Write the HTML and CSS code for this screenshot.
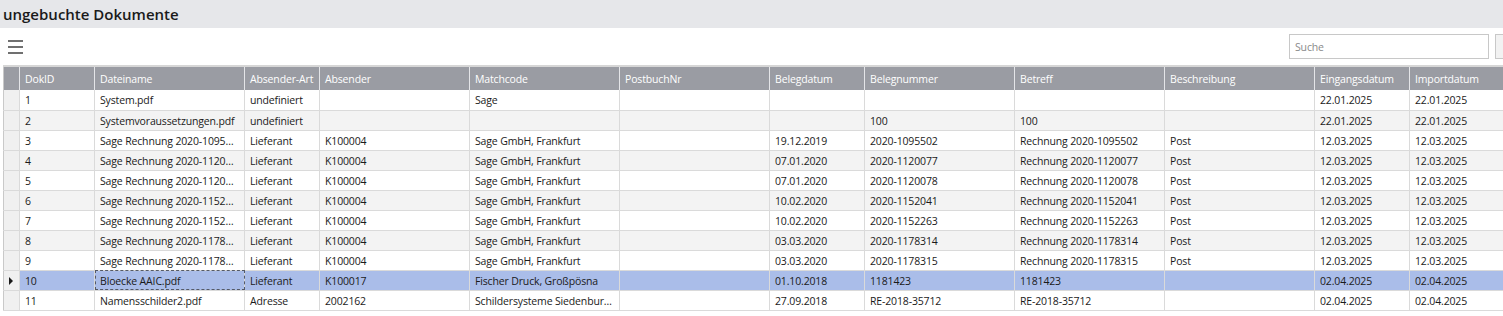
FILE: index.html
```html
<!DOCTYPE html>
<html lang="de">
<head>
  <meta charset="UTF-8">
  <link rel="stylesheet" href="styles.css">
  <title>ungebuchte Dokumente</title>
</head>
<body class="page">
  <header class="titlebar">
    <h1 class="titlebar__title">ungebuchte Dokumente</h1>
  </header>

  <div class="toolbar">
    <button class="menu-button" aria-label="Menü">
      <svg width="16" height="16" viewBox="0 0 16 16">
        <rect x="0" y="1" width="15" height="2" fill="#707070"/>
        <rect x="0" y="7" width="15" height="2" fill="#707070"/>
        <rect x="0" y="13" width="15" height="2" fill="#707070"/>
      </svg>
    </button>
    <div class="search">
      <input class="search__input" type="text" placeholder="Suche">
      <button class="search__button">▾</button>
    </div>
  </div>

  <table class="grid">
    <colgroup>
      <col style="width:16px">
      <col style="width:75px">
      <col style="width:150px">
      <col style="width:75px">
      <col style="width:150px">
      <col style="width:150px">
      <col style="width:150px">
      <col style="width:95px">
      <col style="width:150px">
      <col style="width:150px">
      <col style="width:150px">
      <col style="width:95px">
      <col style="width:95px">
    </colgroup>
    <thead>
      <tr class="grid__head">
        <th class="grid__rowhead"></th>
        <th>DokID</th>
        <th>Dateiname</th>
        <th>Absender-Art</th>
        <th>Absender</th>
        <th>Matchcode</th>
        <th>PostbuchNr</th>
        <th>Belegdatum</th>
        <th>Belegnummer</th>
        <th>Betreff</th>
        <th>Beschreibung</th>
        <th>Eingangsdatum</th>
        <th>Importdatum</th>
      </tr>
    </thead>
    <tbody>
      <tr>
        <td class="grid__rowhead"></td>
        <td>1</td><td>System.pdf</td><td>undefiniert</td><td></td><td>Sage</td><td></td>
        <td></td><td></td><td></td><td></td><td>22.01.2025</td><td>22.01.2025</td>
      </tr>
      <tr class="grid__row_alt">
        <td class="grid__rowhead"></td>
        <td>2</td><td>Systemvoraussetzungen.pdf</td><td>undefiniert</td><td></td><td></td><td></td>
        <td></td><td>100</td><td>100</td><td></td><td>22.01.2025</td><td>22.01.2025</td>
      </tr>
      <tr>
        <td class="grid__rowhead"></td>
        <td>3</td><td>Sage Rechnung 2020-1095502.pdf</td><td>Lieferant</td><td>K100004</td><td>Sage GmbH, Frankfurt</td><td></td>
        <td>19.12.2019</td><td>2020-1095502</td><td>Rechnung 2020-1095502</td><td>Post</td><td>12.03.2025</td><td>12.03.2025</td>
      </tr>
      <tr class="grid__row_alt">
        <td class="grid__rowhead"></td>
        <td>4</td><td>Sage Rechnung 2020-1120077.pdf</td><td>Lieferant</td><td>K100004</td><td>Sage GmbH, Frankfurt</td><td></td>
        <td>07.01.2020</td><td>2020-1120077</td><td>Rechnung 2020-1120077</td><td>Post</td><td>12.03.2025</td><td>12.03.2025</td>
      </tr>
      <tr>
        <td class="grid__rowhead"></td>
        <td>5</td><td>Sage Rechnung 2020-1120078.pdf</td><td>Lieferant</td><td>K100004</td><td>Sage GmbH, Frankfurt</td><td></td>
        <td>07.01.2020</td><td>2020-1120078</td><td>Rechnung 2020-1120078</td><td>Post</td><td>12.03.2025</td><td>12.03.2025</td>
      </tr>
      <tr class="grid__row_alt">
        <td class="grid__rowhead"></td>
        <td>6</td><td>Sage Rechnung 2020-1152041.pdf</td><td>Lieferant</td><td>K100004</td><td>Sage GmbH, Frankfurt</td><td></td>
        <td>10.02.2020</td><td>2020-1152041</td><td>Rechnung 2020-1152041</td><td>Post</td><td>12.03.2025</td><td>12.03.2025</td>
      </tr>
      <tr>
        <td class="grid__rowhead"></td>
        <td>7</td><td>Sage Rechnung 2020-1152263.pdf</td><td>Lieferant</td><td>K100004</td><td>Sage GmbH, Frankfurt</td><td></td>
        <td>10.02.2020</td><td>2020-1152263</td><td>Rechnung 2020-1152263</td><td>Post</td><td>12.03.2025</td><td>12.03.2025</td>
      </tr>
      <tr class="grid__row_alt">
        <td class="grid__rowhead"></td>
        <td>8</td><td>Sage Rechnung 2020-1178314.pdf</td><td>Lieferant</td><td>K100004</td><td>Sage GmbH, Frankfurt</td><td></td>
        <td>03.03.2020</td><td>2020-1178314</td><td>Rechnung 2020-1178314</td><td>Post</td><td>12.03.2025</td><td>12.03.2025</td>
      </tr>
      <tr>
        <td class="grid__rowhead"></td>
        <td>9</td><td>Sage Rechnung 2020-1178315.pdf</td><td>Lieferant</td><td>K100004</td><td>Sage GmbH, Frankfurt</td><td></td>
        <td>03.03.2020</td><td>2020-1178315</td><td>Rechnung 2020-1178315</td><td>Post</td><td>12.03.2025</td><td>12.03.2025</td>
      </tr>
      <tr class="grid__row_selected">
        <td class="grid__rowhead grid__rowhead_current"></td>
        <td>10</td><td class="grid__cell_focus">Bloecke AAIC.pdf</td><td>Lieferant</td><td>K100017</td><td>Fischer Druck, Großpösna</td><td></td>
        <td>01.10.2018</td><td>1181423</td><td>1181423</td><td></td><td>02.04.2025</td><td>02.04.2025</td>
      </tr>
      <tr>
        <td class="grid__rowhead"></td>
        <td>11</td><td>Namensschilder2.pdf</td><td>Adresse</td><td>2002162</td><td>Schildersysteme Siedenburg GmbH</td><td></td>
        <td>27.09.2018</td><td>RE-2018-35712</td><td>RE-2018-35712</td><td></td><td>02.04.2025</td><td>02.04.2025</td>
      </tr>
    </tbody>
  </table>
</body>
</html>
```

FILE: styles.css
```css
html, .page {
  margin: 0;
  overflow: hidden;
  background: #FFFFFF;
  font-family: 'Open Sans', 'Noto Sans', sans-serif;
  color: #1A1A1A;
}

* {
  box-sizing: border-box;
}

.page {
  width: 1530px;
}

.titlebar {
  height: 28px;
  width: 1503px;
  background: #E6E7EA;
  padding: 0 3px;
  display: flex;
  align-items: center;
}

.titlebar__title {
  margin: 0;
  font-size: 15px;
  font-weight: 600;
  color: #1A1A1A;
}

.toolbar {
  height: 37px;
  display: flex;
  align-items: center;
  justify-content: space-between;
  padding: 0 0 0 8px;
}

.menu-button {
  border: 0;
  padding: 0;
  background: none;
  width: 16px;
  height: 16px;
  display: flex;
}

.search {
  display: flex;
  gap: 6px;
  margin-right: 11px;
}

.search__input {
  width: 200px;
  height: 25px;
  border: 1px solid #C8C8C8;
  padding: 0 5px;
  font-family: inherit;
  font-size: 10.5px;
  letter-spacing: -0.15px;
  color: #333333;
}

.search__input::placeholder {
  color: #8A8A8A;
}

.search__button {
  width: 24px;
  height: 25px;
  border: 1px solid #C8C8C8;
  background: #F2F2F2;
  font-size: 9px;
  color: #555555;
  padding: 0;
}

.grid {
  margin-left: 3px;
  border-collapse: collapse;
  table-layout: fixed;
  width: 1501px;
  font-size: 10.5px;
  letter-spacing: -0.15px;
  border-top: 2px solid #D6D6D6;
}

.grid th,
.grid td {
  padding: 0 5px;
  text-align: left;
  white-space: nowrap;
  overflow: hidden;
  text-overflow: ellipsis;
}

.grid__head th {
  height: 24px;
  padding-top: 1px;
  background: #9A9CA3;
  color: #FFFFFF;
  font-weight: 400;
  border-right: 1px solid #E4E5E8;
}

.grid td {
  height: 20px;
  padding-top: 1px;
  border-right: 1px solid #DADADA;
  border-bottom: 1px solid #DADADA;
}

.grid__row_alt td {
  background: #F3F3F3;
}

.grid__row_selected td {
  background: #AABDE9;
}

.grid .grid__rowhead {
  background: #F0F0F0;
  border-left: 1px solid #C9C9C9;
  padding: 0;
  position: relative;
}

.grid__head .grid__rowhead {
  background: #9A9CA3;
}

.grid__rowhead_current::after {
  content: "";
  position: absolute;
  left: 5px;
  top: 6px;
  border-left: 4px solid #1A1A1A;
  border-top: 4px solid transparent;
  border-bottom: 4px solid transparent;
}

.grid td.grid__cell_focus {
  outline: 1px dashed #555A66;
  outline-offset: -1px;
}
```
